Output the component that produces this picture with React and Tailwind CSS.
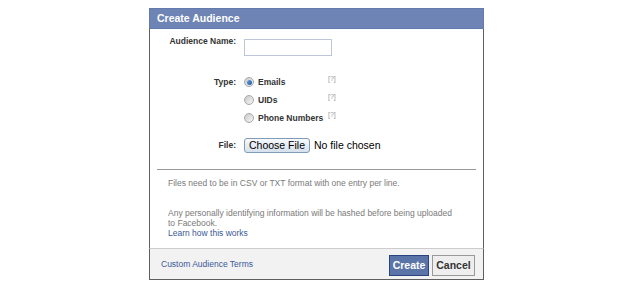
import React from "react";

const Radio = ({ checked }) => (
  <span className="relative flex h-[10px] w-[10px] items-center justify-center rounded-full border border-[#a8a8a8] bg-gradient-to-br from-[#c9c9c9] to-[#f7f7f7]">
    {checked && (
      <span className="h-[5px] w-[5px] rounded-full bg-gradient-to-br from-[#6aa8ea] to-[#1d4f96]" />
    )}
  </span>
);

const TypeOption = ({ label, checked }) => (
  <div className="flex h-[18px] items-center">
    <Radio checked={checked} />
    <span className="ml-[4px] w-[70px] text-[8.5px] font-bold text-[#333333]">
      {label}
    </span>
    <span className="-mt-[6px] text-[7px] text-[#9a9a9a]">[?]</span>
  </div>
);

export default function App() {
  return (
    <div
      className="min-h-[288px] bg-white pt-[8px]"
      style={{ fontFamily: '"Liberation Sans", Arial, sans-serif' }}
    >
      <div className="ml-[149px] w-[335px]">
        {/* Header */}
        <div className="flex h-[21px] items-center border border-[#627aad] bg-[#6d84b4] pl-[7px] text-[10.5px] font-bold text-white">
          Create Audience
        </div>

        {/* Body */}
        <div className="h-[219px] border-x border-[#5f5f5f] bg-white">
          <div className="grid grid-cols-[86px_1fr] gap-x-[8px] pt-[7px]">
            {/* Audience name */}
            <div className="text-right text-[8.5px] font-bold leading-[11px] text-[#333333]">
              Audience Name:
            </div>
            <div className="pt-[3px]">
              <div className="h-[17px] w-[88px] border border-[#bdc7d8] bg-white" />
            </div>

            {/* Type */}
            <div className="mt-[17px] text-right text-[8.5px] font-bold leading-[18px] text-[#333333]">
              Type:
            </div>
            <div className="mt-[17px] flex flex-col">
              <TypeOption label="Emails" checked />
              <TypeOption label="UIDs" />
              <TypeOption label="Phone Numbers" />
            </div>

            {/* File */}
            <div className="mt-[11px] flex h-[15px] items-center justify-end text-[8.5px] font-bold text-[#333333]">
              File:
            </div>
            <div className="mt-[11px] flex h-[15px] items-center">
              <button className="flex h-[15px] w-[66px] items-center justify-center rounded-[3px] border border-[#7f9db9] bg-gradient-to-b from-[#f7f9fc] to-[#d6e1ed] text-[10.5px] text-black">
                Choose File
              </button>
              <span className="ml-[4px] text-[10.5px] text-black">No file chosen</span>
            </div>
          </div>

          <div className="mx-[7px] mt-[16px] h-px bg-[#999999]" />

          <div className="px-[18px] pt-[8px] text-[8.5px] leading-[10px] text-[#7a7a7a]">
            <div className="whitespace-nowrap">
              Files need to be in CSV or TXT format with one entry per line.
            </div>
            <div className="mt-[20px] whitespace-nowrap">
              Any personally identifying information will be hashed before being uploaded
              <br />
              to Facebook.
            </div>
            <a href="#" className="block text-[#3b5998]">
              Learn how this works
            </a>
          </div>
        </div>

        {/* Footer */}
        <div className="flex h-[32px] items-center justify-between border border-t-[#cccccc] border-x-[#5f5f5f] border-b-[#5f5f5f] bg-[#f2f2f2] pl-[11px] pr-[8px]">
          <a href="#" className="text-[8.5px] text-[#3b5998]">
            Custom Audience Terms
          </a>
          <div className="mt-[3px] flex gap-[3px]">
            <button className="h-[21px] w-[40px] border border-[#29447e] bg-[#5b74a8] text-[10.5px] font-bold text-white">
              Create
            </button>
            <button className="h-[21px] w-[43px] border border-[#999999] bg-[#eeeeee] text-[10.5px] font-bold text-[#333333]">
              Cancel
            </button>
          </div>
        </div>
      </div>
    </div>
  );
}
